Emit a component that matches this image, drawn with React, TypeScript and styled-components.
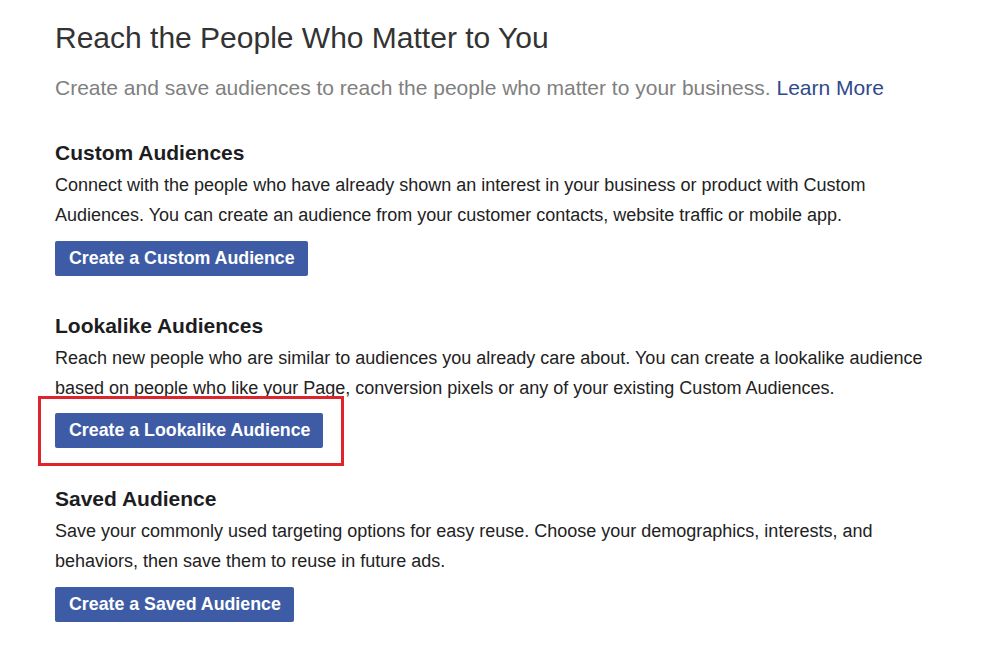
import styled, { createGlobalStyle } from "styled-components";

const GlobalStyle = createGlobalStyle`
  body {
    margin: 0;
    background: #ffffff;
    font-family: "Liberation Sans", Arial, Helvetica, sans-serif;
  }
`;

const Page = styled.main`
  padding: 18px 0 0 55px;
  width: 981px;
  height: 649px;
  box-sizing: border-box;
`;

const Title = styled.h1`
  margin: 0;
  font-size: 30px;
  font-weight: 400;
  line-height: 40px;
  color: #333333;
`;

const Intro = styled.p`
  margin: 16px 0 0;
  font-size: 21px;
  line-height: 28px;
  color: #808080;
`;

const LearnMore = styled.a`
  color: #2f4a8c;
  text-decoration: none;
`;

const Section = styled.section`
  margin-top: 38px;
  & + & {
    margin-top: 37px;
  }
`;

const Heading = styled.h2`
  margin: 0;
  font-size: 21px;
  font-weight: 700;
  line-height: 26px;
  color: #1d1d1f;
`;

const Body = styled.p`
  margin: 4px 0 0;
  font-size: 18px;
  line-height: 30px;
  color: #222222;
`;

const Highlight = styled.div<{ $on?: boolean }>`
  display: inline-block;
  margin: ${(p) => (p.$on ? "-7px 0 -17px -17px" : "11px 0 0")};
  padding: ${(p) => (p.$on ? "14px 18px 15px 14px" : "0")};
  border: ${(p) => (p.$on ? "3px solid #e0242b" : "none")};
`;

const Button = styled.button`
  display: block;
  height: 35px;
  padding: 0 13px 0 14px;
  border: none;
  border-radius: 2px;
  background: #3e5ca5;
  color: #ffffff;
  font-family: "Liberation Sans", Arial, Helvetica, sans-serif;
  font-size: 17.8px;
  font-weight: 700;
  cursor: pointer;
`;

const sections = [
  {
    title: "Custom Audiences",
    lines: [
      "Connect with the people who have already shown an interest in your business or product with Custom",
      "Audiences. You can create an audience from your customer contacts, website traffic or mobile app.",
    ],
    button: "Create a Custom Audience",
  },
  {
    title: "Lookalike Audiences",
    lines: [
      "Reach new people who are similar to audiences you already care about. You can create a lookalike audience",
      "based on people who like your Page, conversion pixels or any of your existing Custom Audiences.",
    ],
    button: "Create a Lookalike Audience",
    highlight: true,
  },
  {
    title: "Saved Audience",
    lines: [
      "Save your commonly used targeting options for easy reuse. Choose your demographics, interests, and",
      "behaviors, then save them to reuse in future ads.",
    ],
    button: "Create a Saved Audience",
  },
];

const App = () => {
  return (
    <>
      <GlobalStyle />
      <Page>
        <Title>Reach the People Who Matter to You</Title>
        <Intro>
          Create and save audiences to reach the people who matter to your business.{" "}
          <LearnMore href="#">Learn More</LearnMore>
        </Intro>
        {sections.map((s) => (
          <Section key={s.title}>
            <Heading>{s.title}</Heading>
            <Body>
              {s.lines[0]}
              <br />
              {s.lines[1]}
            </Body>
            <Highlight $on={s.highlight}>
              <Button>{s.button}</Button>
            </Highlight>
          </Section>
        ))}
      </Page>
    </>
  );
};

export default App;
